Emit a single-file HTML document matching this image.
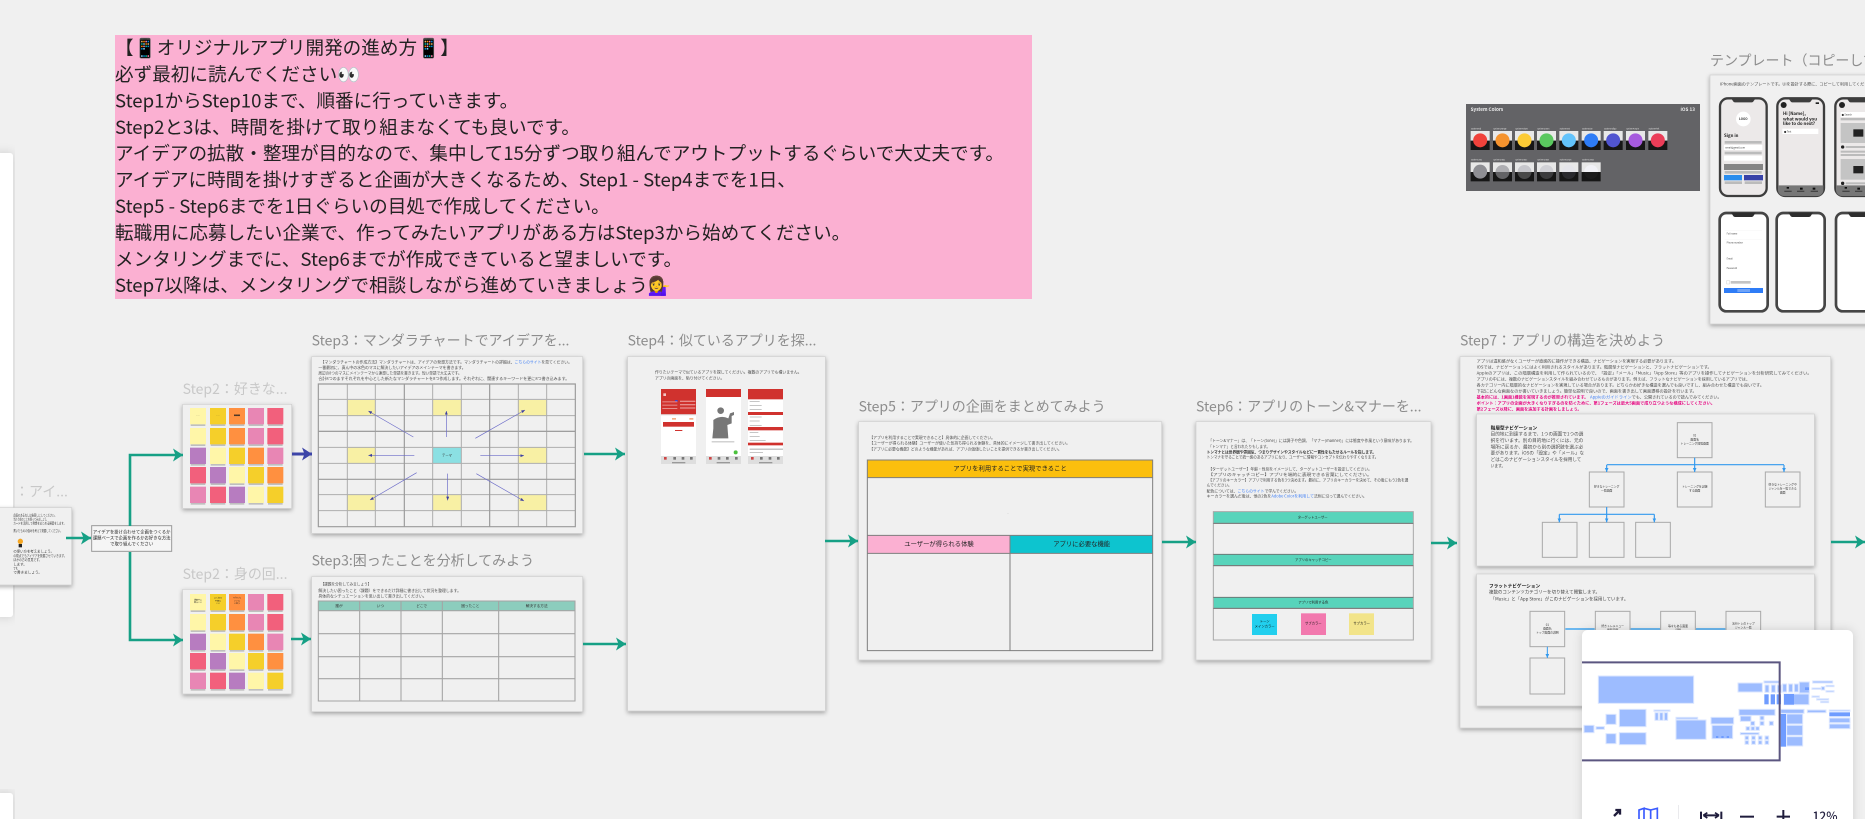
<!DOCTYPE html>
<html lang="ja"><head><meta charset="utf-8"><title>Board</title>
<style>
html,body{margin:0;padding:0;width:1865px;height:819px;overflow:hidden;background:#f0f0f0}
svg{display:block;font-family:"Noto Sans CJK JP","Liberation Sans",sans-serif}
.title{font-size:42px;fill:#8d8d8d}
.lt{font-size:42px;fill:#c8c8c8}
.s{font-size:11.5px;fill:#4a4a4a}
.b{font-weight:700;fill:#333}
.p{font-weight:700;fill:#e6007e}
.l{fill:#3b7cf5}
.box{fill:none;stroke:#a9a9a9;stroke-width:3}
.pnl{fill:#f0f0f0;stroke:#cfcfcf;stroke-width:2;filter:url(#sh)}
.m{fill:#9dbcff;stroke:#dbe6ff;stroke-width:3}
.d{fill:#6f9cff}
</style></head><body>
<svg width="1865" height="819" viewBox="0 0 1865 819" xmlns="http://www.w3.org/2000/svg">
<defs>
<filter id="sh" x="-8%" y="-8%" width="116%" height="118%"><feDropShadow dx="0" dy="5" stdDeviation="6" flood-color="#000" flood-opacity=".33"/></filter>
<filter id="bl" x="0" y="0" width="100%" height="100%"><feGaussianBlur stdDeviation=".35"/></filter>
<filter id="wsh" x="-10%" y="-10%" width="120%" height="120%"><feDropShadow dx="0" dy="0" stdDeviation="5" flood-color="#000" flood-opacity=".14"/></filter>
<marker id="ag" markerUnits="userSpaceOnUse" markerWidth="11" markerHeight="14" refX="10" refY="6.5" orient="auto"><path d="M0 0L10 6.5L0 13L2.5 6.5Z" fill="#14a085"/></marker>
<marker id="ab" markerUnits="userSpaceOnUse" markerWidth="11" markerHeight="14" refX="10" refY="6.5" orient="auto"><path d="M0 0L10 6.5L0 13L2.5 6.5Z" fill="#3c44a8"/></marker>
<marker id="ap" markerUnits="userSpaceOnUse" markerWidth="12" markerHeight="10" refX="11" refY="4.5" orient="auto"><path d="M0 0L11 4.5L0 9Z" fill="#3c3fa0"/></marker>
<marker id="au" markerUnits="userSpaceOnUse" markerWidth="14" markerHeight="12" refX="12" refY="5.5" orient="auto"><path d="M0 0L12 5.5L0 11Z" fill="#3399ee"/></marker>
</defs>
<rect width="1865" height="819" fill="#f0f0f0"/>
<g filter="url(#bl)">

<!-- Pink note -->
<rect x="115" y="35" width="917" height="264" fill="#fbb0d2"/>
<g font-size="18.6" fill="#222">
<text x="115" y="54.5">【📱オリジナルアプリ開発の進め方📱】</text>
<text x="115" y="81">必ず最初に読んでください👀</text>
<text x="115" y="107.4">Step1からStep10まで、順番に行っていきます。</text>
<text x="115" y="133.8">Step2と3は、時間を掛けて取り組まなくても良いです。</text>
<text x="115" y="160.2">アイデアの拡散・整理が目的なので、集中して15分ずつ取り組んでアウトプットするぐらいで大丈夫です。</text>
<text x="115" y="186.6">アイデアに時間を掛けすぎると企画が大きくなるため、Step1 - Step4までを1日、</text>
<text x="115" y="213">Step5 - Step6までを1日ぐらいの目処で作成してください。</text>
<text x="115" y="239.4">転職用に応募したい企業で、作ってみたいアプリがある方はStep3から始めてください。</text>
<text x="115" y="265.8">メンタリングまでに、Step6までが作成できていると望ましいです。</text>
<text x="115" y="292.2">Step7以降は、メンタリングで相談しながら進めていきましょう💁‍♀️</text>
</g>

<!-- System colors -->
<g transform="translate(1440,30) scale(.33333)">
<rect x="78" y="222" width="702" height="261" fill="#636366"/>
<text x="92" y="243" font-size="14" font-weight="700" fill="#eee">System Colors</text>
<text x="765" y="243" font-size="14" font-weight="700" fill="#eee" text-anchor="end">iOS 13</text>
<g fill="#e8e8e8">
<rect x="92" y="303" width="57" height="29"/><rect x="159" y="303" width="57" height="29"/><rect x="225" y="303" width="57" height="29"/><rect x="291" y="303" width="57" height="29"/><rect x="358" y="303" width="57" height="29"/><rect x="425" y="303" width="57" height="29"/><rect x="491" y="303" width="57" height="29"/><rect x="558" y="303" width="57" height="29"/><rect x="625" y="303" width="57" height="29"/>
<rect x="92" y="397" width="57" height="29"/><rect x="159" y="397" width="57" height="29"/><rect x="225" y="397" width="57" height="29"/><rect x="291" y="397" width="57" height="29"/><rect x="358" y="397" width="57" height="29"/><rect x="425" y="397" width="57" height="29"/>
</g>
<g fill="#141414">
<rect x="92" y="332" width="57" height="28"/><rect x="159" y="332" width="57" height="28"/><rect x="225" y="332" width="57" height="28"/><rect x="291" y="332" width="57" height="28"/><rect x="358" y="332" width="57" height="28"/><rect x="425" y="332" width="57" height="28"/><rect x="491" y="332" width="57" height="28"/><rect x="558" y="332" width="57" height="28"/><rect x="625" y="332" width="57" height="28"/>
<rect x="92" y="426" width="57" height="28"/><rect x="159" y="426" width="57" height="28"/><rect x="225" y="426" width="57" height="28"/><rect x="291" y="426" width="57" height="28"/><rect x="358" y="426" width="57" height="28"/><rect x="425" y="426" width="57" height="28"/>
</g>
<circle cx="120.5" cy="331" r="21" fill="#f0433a"/><circle cx="187.5" cy="331" r="21" fill="#f5932f"/><circle cx="253.5" cy="331" r="21" fill="#fccb35"/><circle cx="319.5" cy="331" r="21" fill="#5ac85f"/><circle cx="386.5" cy="331" r="21" fill="#64c3fb"/><circle cx="453.5" cy="331" r="21" fill="#2d7bf6"/><circle cx="519.5" cy="331" r="21" fill="#5155d0"/><circle cx="586.5" cy="331" r="21" fill="#a65ade"/><circle cx="653.5" cy="331" r="21" fill="#eb3d58"/>
<circle cx="120.5" cy="425" r="21" fill="#8e8e93"/>
<path d="M166.5 426a21 21 0 0 1 42 0Z" fill="#aeaeb2"/><path d="M166.5 426a21 21 0 0 0 42 0Z" fill="#636366"/>
<path d="M232.5 426a21 21 0 0 1 42 0Z" fill="#c7c7cc"/><path d="M232.5 426a21 21 0 0 0 42 0Z" fill="#48484a"/>
<path d="M298.5 426a21 21 0 0 1 42 0Z" fill="#d1d1d6"/><path d="M298.5 426a21 21 0 0 0 42 0Z" fill="#3a3a3c"/>
<path d="M365.5 426a21 21 0 0 1 42 0Z" fill="#e5e5ea"/><path d="M365.5 426a21 21 0 0 0 42 0Z" fill="#2c2c2e"/>
<path d="M432.5 426a21 21 0 0 1 42 0Z" fill="#f2f2f7"/><path d="M432.5 426a21 21 0 0 0 42 0Z" fill="#1c1c1e"/>
<g font-size="6" fill="#ddd">
<text x="93" y="298">systemRed</text><text x="160" y="298">systemOrange</text><text x="226" y="298">systemYellow</text><text x="292" y="298">systemGreen</text><text x="359" y="298">systemTeal</text><text x="426" y="298">systemBlue</text><text x="492" y="298">systemIndigo</text><text x="559" y="298">systemPurple</text><text x="626" y="298">systemPink</text>
<text x="93" y="392">systemGray</text><text x="160" y="392">systemGray2</text><text x="226" y="392">systemGray3</text><text x="292" y="392">systemGray4</text><text x="359" y="392">systemGray5</text><text x="426" y="392">systemGray6</text>
</g>
</g>

<!-- Template -->
<g transform="translate(1700,40) scale(.33333)">
<text x="30" y="77" class="title">テンプレート（コピーして利用してください）</text>
<rect x="30" y="105" width="560" height="747" class="pnl"/>
<text x="60" y="136" font-size="11.5" fill="#4a4a4a" textLength="470" lengthAdjust="spacingAndGlyphs">iPhone画面のテンプレートです。UIを設計する際に、コピーして利用してください。</text>
<!-- row 1 -->
<rect x="60" y="175" width="140" height="293" rx="24" fill="#ece9e9" stroke="#3e3e3e" stroke-width="7"/>
<path d="M93 175h74l-6 8a6 6 0 0 1-6 4h-50a6 6 0 0 1-6-4Z" fill="#3e3e3e"/>
<circle cx="130" cy="237" r="22" fill="#fff"/><text x="130" y="240" font-size="9" font-weight="700" text-anchor="middle" fill="#222">LOGO</text>
<text x="72" y="291" font-size="13" font-weight="700" fill="#222">Sign in</text>
<rect x="74" y="303" width="111" height="8" fill="#bbb"/>
<rect x="72" y="315" width="115" height="15" fill="#fff"/><text x="76" y="326" font-size="7" fill="#333">email@gmail.com</text>
<rect x="74" y="335" width="111" height="8" fill="#bbb"/>
<rect x="72" y="347" width="115" height="15" fill="#fff"/>
<rect x="72" y="372" width="117" height="18" fill="#858585"/>
<rect x="74" y="393" width="111" height="8" fill="#bbb"/>
<rect x="72" y="405" width="54" height="16" fill="#2b8ded"/><rect x="132" y="405" width="57" height="16" fill="#3943a8"/>
<rect x="74" y="424" width="52" height="8" fill="#bbb"/><rect x="134" y="424" width="52" height="8" fill="#bbb"/>

<rect x="232" y="175" width="140" height="293" rx="24" fill="#ece9e9" stroke="#3e3e3e" stroke-width="7"/>
<path d="M265 175h74l-6 8a6 6 0 0 1-6 4h-50a6 6 0 0 1-6-4Z" fill="#3e3e3e"/>
<path d="M234 436h136v14a18 18 0 0 1-18 18h-100a18 18 0 0 1-18-18Z" fill="#777"/>
<circle cx="251" cy="195" r="9" fill="#222"/><rect x="347" y="187" width="10" height="5" fill="#222"/>
<g font-size="13" font-weight="700" fill="#222"><text x="249" y="225">Hi [Name],</text><text x="249" y="241">what would you</text><text x="249" y="255">like to do next?</text></g>
<rect x="247" y="266" width="108" height="16" fill="#fff"/><text x="252" y="277" font-size="7" fill="#333">● Text</text>
<g fill="#444"><rect x="253" y="452" width="22" height="4"/><rect x="291" y="452" width="22" height="4"/><rect x="332" y="452" width="22" height="4"/><rect x="300" y="443" width="8" height="6" fill="#111"/><rect x="338" y="443" width="8" height="6" fill="#111"/><rect x="260" y="441" width="7" height="5" fill="#111"/></g>

<rect x="406" y="175" width="140" height="293" rx="24" fill="#ece9e9" stroke="#3e3e3e" stroke-width="7"/>
<path d="M440 175h74l-6 8a6 6 0 0 1-6 4h-50a6 6 0 0 1-6-4Z" fill="#3e3e3e"/>
<circle cx="426" cy="195" r="9" fill="#222"/>
<rect x="422" y="216" width="120" height="15" fill="#fff"/><text x="425" y="227" font-size="7" fill="#333">● Search</text>
<rect x="422" y="234" width="120" height="7" fill="#bbb"/>
<rect x="422" y="249" width="120" height="60" fill="#c4c4c4"/><rect x="460" y="268" width="30" height="22" fill="#222"/>
<circle cx="428" cy="321" r="5" fill="#222"/><rect x="437" y="318" width="100" height="6" fill="#bbb"/>
<rect x="422" y="332" width="120" height="6" fill="#bbb"/><rect x="422" y="342" width="120" height="6" fill="#bbb"/>
<rect x="422" y="357" width="120" height="62" fill="#c4c4c4"/><rect x="460" y="378" width="30" height="22" fill="#222"/>
<circle cx="428" cy="430" r="5" fill="#222"/><rect x="437" y="427" width="100" height="6" fill="#bbb"/>
<path d="M408 436h140v32h-122a18 18 0 0 1-18-18Z" fill="#777"/>
<rect x="427" y="452" width="22" height="4" fill="#444"/><rect x="465" y="452" width="22" height="4" fill="#444"/><rect x="472" y="443" width="8" height="6" fill="#111"/><rect x="434" y="441" width="7" height="5" fill="#111"/>
<!-- row 2 -->
<g fill="#fff" stroke="#444" stroke-width="8">
<rect x="59" y="519" width="144" height="295" rx="20"/>
<rect x="230" y="519" width="144" height="295" rx="20"/>
<rect x="408" y="519" width="144" height="295" rx="20"/>
</g>
<g fill="#2e2e2e">
<path d="M93 518h74l-6 9a6 6 0 0 1-6 4h-50a6 6 0 0 1-6-4Z"/>
<path d="M265 518h74l-6 9a6 6 0 0 1-6 4h-50a6 6 0 0 1-6-4Z"/>
<path d="M443 518h74l-6 9a6 6 0 0 1-6 4h-50a6 6 0 0 1-6-4Z"/>
</g>
<g font-size="7" fill="#444"><text x="80" y="583">Full name</text><text x="80" y="610">Phone number</text><text x="80" y="659">Email</text><text x="80" y="687">Password</text></g>
<rect x="74" y="571" width="112" height="1" fill="#eee"/><rect x="74" y="598" width="112" height="1" fill="#eee"/>
<rect x="92" y="723" width="60" height="8" fill="#c4c4c4"/><rect x="80" y="722" width="9" height="10" fill="#fff" stroke="#bbb"/>
<rect x="72" y="744" width="117" height="15" fill="#2d7bf6"/><rect x="112" y="747" width="38" height="9" fill="#6ea3f8"/>
</g>

<!-- Left white panels -->
<rect x="-6" y="153" width="19" height="464" rx="3" fill="#fff" filter="url(#wsh)"/>

<!-- Step1 card -->
<g transform="translate(0,320) scale(.33333)">
<text x="45" y="530" class="lt">：アイ...</text>
<rect x="-100" y="563" width="315" height="232" class="pnl"/>
<g font-size="11" fill="#3c3c3c">
<text x="40" y="589" textLength="130" lengthAdjust="spacingAndGlyphs">企画のあるなしは後回しにしてください。</text>
<text x="40" y="601" textLength="105" lengthAdjust="spacingAndGlyphs">当たり前のことを探ってみましょう。</text>
<text x="40" y="613" textLength="158" lengthAdjust="spacingAndGlyphs">カードを活用して発想をまとめる練習をします。</text>
<text x="40" y="636" textLength="148" lengthAdjust="spacingAndGlyphs">書いたものの強みを考えて発展してください。</text>
<text x="40" y="698" textLength="122" lengthAdjust="spacingAndGlyphs">の使い方を考えましょう。</text>
<text x="40" y="711" textLength="160" lengthAdjust="spacingAndGlyphs">の視点でもアイデアを発展させていきます。</text>
<text x="40" y="723" textLength="85" lengthAdjust="spacingAndGlyphs">ほかの方の意見です。</text>
<text x="40" y="736" textLength="40" lengthAdjust="spacingAndGlyphs">します。</text>
<text x="40" y="748" textLength="18" lengthAdjust="spacingAndGlyphs">です。</text>
<text x="40" y="760" textLength="86" lengthAdjust="spacingAndGlyphs">で書きましょう。</text>
</g>
<circle cx="61" cy="664" r="8" fill="#f5a623"/><rect x="56" y="672" width="10" height="10" fill="#222"/>
<rect x="275" y="617" width="240" height="77" fill="#f5f5f5" stroke="#9a9a9a" stroke-width="3"/>
<g font-size="13" fill="#222" text-anchor="middle">
<text x="395" y="641">アイデアを掛け合わせて企画をつくるか</text>
<text x="395" y="659">課題ベースで企画を作るかお好きな方法</text>
<text x="395" y="677">で取り組んでください</text>
</g>
</g>

<!-- Sticky panels -->
<g transform="translate(0,320) scale(.33333)">
<text x="548" y="222" class="lt">Step2：好きな...</text>
<text x="548" y="777" class="lt">Step2：身の回...</text>
<rect x="548" y="253" width="327" height="312" class="pnl"/>
<rect x="548" y="808" width="327" height="314" class="pnl"/>
<g id="st1">
<g fill="#a0a0a0" opacity=".6">
<rect x="572" y="268" width="44" height="50"/><rect x="632" y="268" width="44" height="50"/><rect x="689" y="268" width="44" height="50"/><rect x="746" y="268" width="44" height="50"/><rect x="804" y="268" width="44" height="50"/>
<rect x="572" y="328" width="44" height="50"/><rect x="632" y="328" width="44" height="50"/><rect x="689" y="328" width="44" height="50"/><rect x="746" y="328" width="44" height="50"/><rect x="804" y="328" width="44" height="50"/>
<rect x="572" y="387" width="44" height="50"/><rect x="632" y="387" width="44" height="50"/><rect x="689" y="387" width="44" height="50"/><rect x="746" y="387" width="44" height="50"/><rect x="804" y="387" width="44" height="50"/>
<rect x="572" y="445" width="44" height="50"/><rect x="632" y="445" width="44" height="50"/><rect x="689" y="445" width="44" height="50"/><rect x="746" y="445" width="44" height="50"/><rect x="804" y="445" width="44" height="50"/>
<rect x="572" y="504" width="44" height="50"/><rect x="632" y="504" width="44" height="50"/><rect x="689" y="504" width="44" height="50"/><rect x="746" y="504" width="44" height="50"/><rect x="804" y="504" width="44" height="50"/>
</g>
<rect x="570" y="264" width="48" height="49" fill="#fff6a8"/><rect x="630" y="264" width="48" height="49" fill="#f5cf2c"/><rect x="687" y="264" width="48" height="49" fill="#ff9040"/><rect x="744" y="264" width="48" height="49" fill="#e886b4"/><rect x="802" y="264" width="48" height="49" fill="#f2607c"/>
<rect x="570" y="324" width="48" height="49" fill="#fff6a8"/><rect x="630" y="324" width="48" height="49" fill="#f5cf2c"/><rect x="687" y="324" width="48" height="49" fill="#ff9040"/><rect x="744" y="324" width="48" height="49" fill="#e886b4"/><rect x="802" y="324" width="48" height="49" fill="#f2607c"/>
<rect x="570" y="383" width="48" height="49" fill="#b77cc0"/><rect x="630" y="383" width="48" height="49" fill="#fff6a8"/><rect x="687" y="383" width="48" height="49" fill="#f5cf2c"/><rect x="744" y="383" width="48" height="49" fill="#ff9040"/><rect x="802" y="383" width="48" height="49" fill="#e886b4"/>
<rect x="570" y="441" width="48" height="49" fill="#f2607c"/><rect x="630" y="441" width="48" height="49" fill="#b77cc0"/><rect x="687" y="441" width="48" height="49" fill="#fff6a8"/><rect x="744" y="441" width="48" height="49" fill="#f5cf2c"/><rect x="802" y="441" width="48" height="49" fill="#ff9040"/>
<rect x="570" y="500" width="48" height="49" fill="#e886b4"/><rect x="630" y="500" width="48" height="49" fill="#f2607c"/><rect x="687" y="500" width="48" height="49" fill="#b77cc0"/><rect x="744" y="500" width="48" height="49" fill="#fff6a8"/><rect x="802" y="500" width="48" height="49" fill="#f5cf2c"/>
</g>
<use href="#st1" y="558"/>
<g font-size="6" fill="#222" text-anchor="middle">
<text x="594" y="288">・・</text><text x="654" y="288">・・</text><text x="711" y="288">●●●</text>
<text x="594" y="842">通勤中に</text><text x="594" y="849">困ること</text>
<text x="654" y="836">よくある</text><text x="654" y="844">不便な</text><text x="654" y="852">こと</text>
<text x="711" y="836">できたら</text><text x="711" y="844">いいな</text><text x="711" y="852">と思う</text>
</g>
</g>

<!-- Step3 -->
<g transform="translate(300,320) scale(.33333)">
<text x="35" y="76" class="title">Step3：マンダラチャートでアイデアを...</text>
<rect x="35" y="110" width="813" height="530" class="pnl"/>
<text x="62" y="130" class="s" textLength="582" lengthAdjust="spacingAndGlyphs">【マンダラチャートの作成方法】マンダラチャートは、アイデアの発想方法です。マンダラチャートの詳細は、</text>
<text x="644" y="130" class="s l" textLength="80" lengthAdjust="spacingAndGlyphs">こちらのサイト</text>
<text x="724" y="130" class="s" textLength="92" lengthAdjust="spacingAndGlyphs">を見てください。</text>
<text x="55" y="147" class="s" textLength="442" lengthAdjust="spacingAndGlyphs">一番最初に、真ん中の水色のマスに解決したいアイデアのメインテーマを書きます。</text>
<text x="55" y="164" class="s" textLength="430" lengthAdjust="spacingAndGlyphs">周辺の8つのマスにメインテーマから連想した単語を書きます。短い単語で大丈夫です。</text>
<text x="55" y="180" class="s" textLength="753" lengthAdjust="spacingAndGlyphs">合計8つのますそれぞれを中心とした新たなマンダラチャートを8つ作成します。それぞれに、関連するキーワードを更に8つ書き込みます。</text>
<g fill="#f8f0a4">
<rect x="142" y="240" width="84" height="47"/><rect x="398" y="240" width="86" height="47"/><rect x="655" y="240" width="85" height="47"/>
<rect x="142" y="382" width="84" height="48"/><rect x="655" y="382" width="85" height="48"/>
<rect x="142" y="524" width="84" height="48"/><rect x="398" y="524" width="86" height="48"/><rect x="655" y="524" width="85" height="48"/>
</g>
<rect x="398" y="382" width="86" height="48" fill="#8be0e3"/>
<text x="441" y="409" font-size="10" fill="#333" text-anchor="middle">テーマ</text>
<path d="M142 192V620M226 192V620M398 192V620M484 192V620M655 192V620M740 192V620M55 238H826M55 287H826M55 334H826M55 430H826M55 524H826M55 572H826M55 382H826" fill="none" stroke="#adadad" stroke-width="3"/>
<path d="M55 192H826V620H55ZM313 192V620M569 192V620M55 334H826M55 478H826" fill="none" stroke="#9a9a9a" stroke-width="3.5"/>
<g stroke="#6a6ac8" stroke-width="2" fill="none">
<path d="M340 351L205 273" marker-end="url(#ap)"/><path d="M439 351V273" marker-end="url(#ap)"/><path d="M526 355L675 270" marker-end="url(#ap)"/><path d="M343 407L205 406" marker-end="url(#ap)"/><path d="M541 407H672" marker-end="url(#ap)"/><path d="M350 458L210 540" marker-end="url(#ap)"/><path d="M443 461V541" marker-end="url(#ap)"/><path d="M529 461L672 543" marker-end="url(#ap)"/>
</g>
<text x="35" y="736" class="title">Step3:困ったことを分析してみよう</text>
<rect x="35" y="770" width="813" height="405" class="pnl"/>
<text x="62" y="797" class="s" textLength="152" lengthAdjust="spacingAndGlyphs">【課題を分析してみましょう】</text>
<text x="55" y="816" class="s" textLength="428" lengthAdjust="spacingAndGlyphs">解決したい困ったこと（課題）をできるだけ詳細に書き出して状況を整理します。</text>
<text x="55" y="833" class="s" textLength="325" lengthAdjust="spacingAndGlyphs">具体的なシチュエーションを思い出して書き出してください。</text>
<rect x="55" y="843" width="770" height="29" fill="#8ccdbd"/>
<path d="M55 843H825V1143H55ZM179 843V1143M303 843V1143M427 843V1143M596 843V1143M55 872H825M55 941H825M55 1010H825M55 1076H825" fill="none" stroke="#a4a4a4" stroke-width="3.2"/>
<g font-size="11" fill="#333" text-anchor="middle"><text x="117" y="861">誰が</text><text x="241" y="861">いつ</text><text x="365" y="861">どこで</text><text x="511" y="861">困ったこと</text><text x="710" y="861">解決する方法</text></g>
</g>

<!-- Step4 -->
<g transform="translate(600,320) scale(.33333)">
<text x="83" y="76" class="title">Step4：似ているアプリを探...</text>
<rect x="83" y="110" width="593" height="1063" class="pnl"/>
<text x="165" y="161" class="s" textLength="440" lengthAdjust="spacingAndGlyphs">作りたいテーマで似ているアプリを探してください。複数のアプリでも構いません。</text>
<text x="165" y="179" class="s" textLength="208" lengthAdjust="spacingAndGlyphs">アプリの画面を、貼り付けてください。</text>
<rect x="183" y="207" width="105" height="225" fill="#fff"/><rect x="183" y="207" width="105" height="76" fill="#d0312d"/><rect x="183" y="283" width="105" height="3" fill="#ddd"/>
<rect x="189" y="306" width="93" height="14" fill="#d0312d"/><rect x="183" y="408" width="105" height="24" fill="#dedede"/>
<rect x="190" y="220" width="8" height="8" fill="#f4c6c5"/><rect x="225" y="240" width="8" height="6" fill="#4444cc"/>
<rect x="240" y="242" width="46" height="4" fill="#e78e8c"/><rect x="240" y="252" width="46" height="4" fill="#e78e8c"/><rect x="240" y="262" width="46" height="4" fill="#e78e8c"/>
<rect x="187" y="244" width="45" height="3" fill="#e78e8c"/><rect x="187" y="254" width="45" height="3" fill="#e78e8c"/><rect x="187" y="264" width="45" height="3" fill="#e78e8c"/>
<rect x="216" y="294" width="12" height="5" fill="#f4b087"/><rect x="268" y="294" width="12" height="5" fill="#f4b087"/><rect x="225" y="330" width="22" height="3" fill="#d0312d"/>
<rect x="192" y="411" width="8" height="8" fill="#c44"/><rect x="220" y="411" width="8" height="8" fill="#777"/><rect x="245" y="411" width="8" height="8" fill="#777"/><rect x="270" y="411" width="8" height="8" fill="#777"/><rect x="216" y="426" width="40" height="4" fill="#999"/>

<rect x="318" y="207" width="105" height="225" fill="#fff"/><rect x="318" y="207" width="105" height="24" fill="#d0312d"/><rect x="318" y="408" width="105" height="24" fill="#dedede"/>
<circle cx="362" cy="272" r="10" fill="#777"/>
<path d="M340 300Q362 284 385 295L390 280L402 276V285L395 288V310L382 315L385 355H337L340 325Z" fill="#777"/>
<rect x="335" y="364" width="68" height="3" fill="#bbb"/><circle cx="407" cy="397" r="6" fill="#4cc23c"/>
<rect x="327" y="411" width="8" height="8" fill="#c44"/><rect x="353" y="411" width="8" height="8" fill="#777"/><rect x="378" y="411" width="8" height="8" fill="#777"/><rect x="405" y="411" width="8" height="8" fill="#777"/><rect x="350" y="426" width="40" height="4" fill="#999"/>

<rect x="444" y="207" width="105" height="225" fill="#fff"/><rect x="444" y="207" width="105" height="31" fill="#d0312d"/><rect x="444" y="276" width="105" height="9" fill="#d0312d"/><rect x="444" y="321" width="105" height="10" fill="#d0312d"/><rect x="444" y="368" width="105" height="8" fill="#d0312d"/><rect x="444" y="408" width="105" height="24" fill="#dedede"/>
<g fill="#aaa"><rect x="449" y="244" width="30" height="2"/><rect x="449" y="256" width="36" height="2"/><rect x="449" y="268" width="36" height="2"/><rect x="449" y="290" width="36" height="2"/><rect x="449" y="302" width="30" height="2"/><rect x="449" y="315" width="36" height="2"/><rect x="449" y="337" width="26" height="2"/><rect x="449" y="349" width="30" height="2"/><rect x="449" y="360" width="48" height="2"/><rect x="449" y="386" width="100" height="3"/><rect x="449" y="396" width="40" height="2"/></g>
<rect x="453" y="411" width="8" height="8" fill="#c44"/><rect x="480" y="411" width="8" height="8" fill="#777"/><rect x="506" y="411" width="8" height="8" fill="#777"/><rect x="531" y="411" width="8" height="8" fill="#777"/><rect x="477" y="426" width="40" height="4" fill="#999"/>
</g>

<!-- Step5 -->
<g transform="translate(840,390) scale(.33333)">
<text x="56" y="65" class="title">Step5：アプリの企画をまとめてみよう</text>
<rect x="56" y="95" width="909" height="715" class="pnl"/>
<text x="88" y="147" class="s" textLength="377" lengthAdjust="spacingAndGlyphs">【アプリを利用することで実現できること】具体的に企画してください。</text>
<text x="88" y="164" class="s" textLength="602" lengthAdjust="spacingAndGlyphs">【ユーザーが得られる体験】ユーザーが使いた気持ち得られる体験を、具体的にイメージして書き出してください。</text>
<text x="88" y="181" class="s" textLength="577" lengthAdjust="spacingAndGlyphs">【アプリに必要な機能】どのような機能があれば、アプリの価値したいことを提供できるか書き出してください。</text>
<rect x="82" y="210" width="856" height="53" fill="#fbbf0c"/>
<rect x="82" y="436" width="428" height="54" fill="#fbb0d2"/><rect x="510" y="436" width="428" height="54" fill="#10c4cf"/>
<path d="M82 210H938V782H82ZM82 263H938M82 436H938M82 490H938M510 436V782" fill="none" stroke="#7e7e7e" stroke-width="3"/>
<g font-size="19" fill="#222" text-anchor="middle">
<text x="510" y="241">アプリを利用することで実現できること</text>
<text x="297" y="468">ユーザーが得られる体験</text>
<text x="725" y="468">アプリに必要な機能</text>
</g>
<text x="504" y="372" font-size="8" fill="#555" text-anchor="middle">.</text>
</g>

<!-- Step6 -->
<g transform="translate(1190,390) scale(.33333)">
<text x="18" y="65" class="title">Step6：アプリのトーン&amp;マナーを...</text>
<rect x="18" y="95" width="705" height="715" class="pnl"/>
<text x="55" y="156" class="s" textLength="617" lengthAdjust="spacingAndGlyphs">「トーン&amp;マナー」は、「トーン(tone)」には調子や色調、「マナー(manner)」には態度や作風という意味があります。</text>
<text x="55" y="174" class="s" textLength="185" lengthAdjust="spacingAndGlyphs">「トンマナ」と言われたりもします。</text>
<text x="50" y="190" class="s b" textLength="508" lengthAdjust="spacingAndGlyphs">トンマナとは世界観や雰囲気、つまりデザインやスタイルなどに一貫性をもたせるルールを指します。</text>
<text x="50" y="205" class="s" textLength="515" lengthAdjust="spacingAndGlyphs">トンマナを守ることで統一感のあるアプリになり、ユーザーに情報やコンセプトを伝わりやすくなります。</text>
<text x="55" y="241" class="s" textLength="491" lengthAdjust="spacingAndGlyphs">【ターゲットユーザー】年齢・性別をイメージして、ターゲットユーザーを設定してください。</text>
<text x="55" y="258" class="s" textLength="490" lengthAdjust="spacingAndGlyphs">【アプリのキャッチコピー】アプリを端的に表現できる言葉にしてください。</text>
<text x="55" y="274" class="s" textLength="600" lengthAdjust="spacingAndGlyphs">【アプリのキーカラー】アプリで利用する色を3つ決めます。最初に、アプリのキーカラーを決めて、その後にもう2色を選</text>
<text x="50" y="290" class="s" textLength="75" lengthAdjust="spacingAndGlyphs">んでください。</text>
<text x="50" y="308" class="s" textLength="92" lengthAdjust="spacingAndGlyphs">配色については、</text>
<text x="143" y="308" class="s l" textLength="80" lengthAdjust="spacingAndGlyphs">こちらのサイト</text>
<text x="224" y="308" class="s" textLength="101" lengthAdjust="spacingAndGlyphs">で学んでください。</text>
<text x="50" y="323" class="s" textLength="194" lengthAdjust="spacingAndGlyphs">キーカラーを選んだ後は、他の2色を</text>
<text x="244" y="323" class="s l" textLength="128" lengthAdjust="spacingAndGlyphs">Adobe Colorを利用して</text>
<text x="372" y="323" class="s" textLength="158" lengthAdjust="spacingAndGlyphs">法則に沿って選んでください。</text>
<g fill="#58d4bb"><rect x="70" y="365" width="600" height="35"/><rect x="70" y="493" width="600" height="34"/><rect x="70" y="622" width="600" height="33"/></g>
<path d="M70 365H670V750H70ZM70 400H670M70 527H670M70 655H670" fill="none" stroke="#a8a8a8" stroke-width="3"/>
<path d="M70 400H670M70 493H670M70 527H670M70 622H670M70 655H670" fill="none" stroke="#6c6c6c" stroke-width="2.5"/>
<g font-size="10" fill="#222" text-anchor="middle"><text x="368" y="385">ターゲットユーザー</text><text x="370" y="513">アプリのキャッチコピー</text><text x="370" y="641">アプリで利用する色</text></g>
<rect x="186" y="672" width="75" height="63" fill="#22cfee"/><rect x="333" y="670" width="75" height="65" fill="#f279ae"/><rect x="477" y="670" width="75" height="65" fill="#f2e48a"/>
<g font-size="10" fill="#111" text-anchor="middle"><text x="224" y="697">トーン</text><text x="224" y="712">メインカラー</text><text x="370" y="704">サブカラー</text><text x="515" y="704">サブカラー</text></g>
</g>

<!-- Step7 -->
<g transform="translate(1450,330) scale(.33333)">
<text x="30" y="47" class="title">Step7：アプリの構造を決めよう</text>
<rect x="30" y="80" width="1112" height="1114" class="pnl"/>
<text x="80" y="97" class="s" textLength="598" lengthAdjust="spacingAndGlyphs">アプリは違和感がなくユーザーが直感的に操作ができる構造、ナビゲーションを実現する必要があります。</text>
<text x="80" y="116" class="s" textLength="705" lengthAdjust="spacingAndGlyphs">iOSでは、ナビゲーションにはよく利用されるスタイルがあります。階層型ナビゲーションと、フラットナビゲーションです。</text>
<text x="80" y="134" class="s" textLength="1005" lengthAdjust="spacingAndGlyphs">Appleのアプリは、この階層構造を利用して作られているので、「設定」「メール」「Music」「App Store」等のアプリを操作してナビゲーションを分析研究してみてください。</text>
<text x="80" y="152" class="s" textLength="820" lengthAdjust="spacingAndGlyphs">アプリの中には、複数のナビゲーションスタイルを組み合わせているものがあります。例えば、フラットなナビゲーションを採用しているアプリでは、</text>
<text x="80" y="170" class="s" textLength="862" lengthAdjust="spacingAndGlyphs">各カテゴリー内に階層的なナビゲーションを実現している場合があります。どちらかお好きな構造を選んでも良いですし、組み合わせた構造でも良いです。</text>
<text x="80" y="188" class="s" textLength="660" lengthAdjust="spacingAndGlyphs">下記にどんな画面なのか書いていきましょう。簡単な説明で良いので、画面を書き出して画面遷移の設計を行います。</text>
<text x="80" y="206" class="s p" textLength="335" lengthAdjust="spacingAndGlyphs">基本的には、1画面1機能を実現するのが推奨されています。</text>
<text x="420" y="206" class="s l" textLength="125" lengthAdjust="spacingAndGlyphs">Appleのガイドライン</text>
<text x="545" y="206" class="s" textLength="270" lengthAdjust="spacingAndGlyphs">でも、公開されているので読んでみてください。</text>
<text x="80" y="224" class="s p" textLength="715" lengthAdjust="spacingAndGlyphs">ポイント：アプリの企画が大きくなりすぎるのを防ぐために、第1フェーズは最大5画面で成り立つような構成にしてください。</text>
<text x="80" y="242" class="s p" textLength="315" lengthAdjust="spacingAndGlyphs">第2フェーズ以降に、画面を追加する計画をしましょう。</text>

<rect x="80" y="252" width="1013" height="456" class="pnl"/>
<text x="122" y="299" font-size="14" font-weight="700" fill="#222">階層型ナビゲーション</text>
<g font-size="14" fill="#4a4a4a">
<text x="122" y="317" textLength="278" lengthAdjust="spacingAndGlyphs">目的地に到達するまで、1つの画面で1つの選</text>
<text x="122" y="336" textLength="278" lengthAdjust="spacingAndGlyphs">択を行います。別の目的地に行くには、元の</text>
<text x="122" y="355" textLength="278" lengthAdjust="spacingAndGlyphs">場所に戻るか、最初から別の選択肢を選ぶ必</text>
<text x="122" y="374" textLength="280" lengthAdjust="spacingAndGlyphs">要があります。iOSの「設定」や「メール」な</text>
<text x="122" y="393" textLength="272" lengthAdjust="spacingAndGlyphs">どはこのナビゲーションスタイルを採用して</text>
<text x="122" y="412" textLength="44" lengthAdjust="spacingAndGlyphs">います。</text>
</g>
<rect class="box" x="682" y="278" width="104" height="105"/><rect class="box" x="418" y="426" width="104" height="105"/><rect class="box" x="682" y="426" width="104" height="105"/><rect class="box" x="946" y="426" width="104" height="105"/><rect class="box" x="277" y="577" width="104" height="105"/><rect class="box" x="418" y="577" width="104" height="105"/><rect class="box" x="557" y="577" width="104" height="105"/>
<g font-size="8.5" fill="#333" text-anchor="middle">
<text x="734" y="320">01</text><text x="734" y="331">画面名</text><text x="734" y="343">トレーニング閲覧画面</text>
<text x="470" y="473">好きなトレーニング</text><text x="470" y="485">一覧画面</text>
<text x="734" y="473">トレーニングを記録</text><text x="734" y="485">する画面</text>
<text x="998" y="466">好きなトレーニングや</text><text x="998" y="478">ジャンルを一覧できる</text><text x="998" y="490">画面</text>
</g>
<g fill="none" stroke="#3399ee" stroke-width="3.5">
<path d="M734 383V426" marker-end="url(#au)"/><path d="M470 405V426" marker-end="url(#au)"/><path d="M1002 405V426" marker-end="url(#au)"/><path d="M470 404H1002"/>
<path d="M470 531V577" marker-end="url(#au)"/><path d="M328 553V577" marker-end="url(#au)"/><path d="M613 553V577" marker-end="url(#au)"/><path d="M328 553H613"/>
</g>

<rect x="80" y="732" width="1013" height="396" class="pnl"/>
<text x="117" y="773" font-size="14" font-weight="700" fill="#222">フラットナビゲーション</text>
<text x="117" y="791" font-size="13" fill="#444" textLength="333" lengthAdjust="spacingAndGlyphs">複数のコンテンツカテゴリーを切り替えて閲覧します。</text>
<text x="122" y="811" font-size="13" fill="#444" textLength="413" lengthAdjust="spacingAndGlyphs">「Music」と「App Store」がこのナビゲーションを採用しています。</text>
<rect class="box" x="240" y="844" width="104" height="106"/><rect class="box" x="436" y="844" width="104" height="106"/><rect class="box" x="632" y="844" width="104" height="106"/><rect class="box" x="828" y="844" width="104" height="106"/><rect class="box" x="240" y="984" width="104" height="108"/>
<g font-size="8.5" fill="#333" text-anchor="middle">
<text x="292" y="888">01</text><text x="292" y="899">画面名</text><text x="292" y="911">トップ画面の説明</text>
<text x="488" y="891">好きトレメニュー</text><text x="488" y="903">閲覧画面</text>
<text x="684" y="891">等々もある画面</text><text x="684" y="903">記録</text>
<text x="880" y="883">流行トレのトップ</text><text x="880" y="895">ジャンル一覧</text><text x="880" y="907">できる</text>
</g>
<g fill="none" stroke="#5ab0f0" stroke-width="5">
<path d="M346 897H434M542 897H630M738 897H826"/>
</g>
<path d="M292 950V984" fill="none" stroke="#3399ee" stroke-width="3" marker-end="url(#au)"/>
</g>

<!-- Arrows -->
<g fill="none" stroke="#14a085" stroke-width="2.6">
<path d="M66 538H91" marker-end="url(#ag)"/>
<path d="M130 526V455H183" marker-end="url(#ag)"/>
<path d="M130 552V640H183" marker-end="url(#ag)"/>
<path d="M291 639H311" marker-end="url(#ag)"/>
<path d="M584 454H625" marker-end="url(#ag)"/>
<path d="M583 644H626" marker-end="url(#ag)"/>
<path d="M825 541H858" marker-end="url(#ag)"/>
<path d="M1162 542H1196" marker-end="url(#ag)"/>
<path d="M1431 543H1457" marker-end="url(#ag)"/>
<path d="M1831 542H1865" marker-end="url(#ag)"/>
<path d="M292 454H312" stroke="#3c44a8" stroke-width="3" marker-end="url(#ab)"/>
</g>

<rect x="-6" y="793" width="19" height="40" rx="3" fill="#fff" filter="url(#wsh)"/>
</g>

<!-- Minimap -->
<rect x="1582" y="630" width="271" height="200" rx="6" fill="#fff" filter="url(#wsh)"/>
<g transform="translate(1560,620) scale(.33333)">
<rect class="m" x="115" y="168" width="286" height="82"/>
<rect class="m" x="534" y="189" width="73" height="27"/>
<rect class="m" x="72" y="316" width="30" height="22"/><rect class="m" x="108" y="320" width="25" height="8"/>
<rect class="m" x="138" y="283" width="30" height="30"/><rect class="m" x="138" y="341" width="30" height="30"/>
<rect class="m" x="178" y="268" width="80" height="52"/><rect class="m" x="178" y="338" width="80" height="36"/>
<rect class="m" x="282" y="270" width="48" height="4"/><rect class="m" x="285" y="278" width="10" height="23"/><rect class="m" x="299" y="278" width="10" height="23"/><rect class="m" x="313" y="278" width="10" height="23"/>
<rect class="m" x="348" y="292" width="65" height="5"/><rect class="m" x="348" y="300" width="90" height="58"/>
<rect class="m" x="453" y="292" width="68" height="20"/><rect class="m" x="456" y="316" width="62" height="40"/>
<rect class="d" x="468" y="348" width="7" height="6"/><rect class="d" x="484" y="348" width="7" height="6"/><rect class="d" x="500" y="348" width="7" height="6"/>
<rect class="m" x="537" y="268" width="108" height="18"/><rect class="m" x="541" y="288" width="32" height="16"/>
<rect class="m" x="600" y="288" width="12" height="12"/><rect class="m" x="572" y="304" width="12" height="12"/><rect class="m" x="600" y="304" width="12" height="12"/><rect class="m" x="628" y="304" width="12" height="12"/>
<rect class="m" x="558" y="320" width="11" height="11"/><rect class="m" x="573" y="320" width="11" height="11"/><rect class="m" x="587" y="320" width="11" height="11"/>
<rect class="m" x="541" y="338" width="56" height="6"/>
<rect class="m" x="555" y="348" width="11" height="11"/><rect class="m" x="575" y="348" width="11" height="11"/><rect class="m" x="595" y="348" width="11" height="11"/><rect class="m" x="615" y="348" width="11" height="11"/>
<rect class="m" x="555" y="362" width="11" height="11"/><rect class="m" x="575" y="362" width="11" height="11"/><rect class="m" x="595" y="362" width="11" height="11"/><rect class="m" x="615" y="362" width="11" height="11"/>
<!-- top right cluster -->
<rect class="m" x="612" y="183" width="48" height="6"/>
<rect class="m" x="615" y="195" width="12" height="22"/><rect class="m" x="634" y="195" width="12" height="22"/><rect class="m" x="652" y="195" width="12" height="22"/>
<rect class="m" x="668" y="192" width="12" height="24"/><rect class="m" x="686" y="192" width="12" height="24"/><rect class="m" x="703" y="192" width="12" height="24"/>
<rect x="718" y="186" width="30" height="33" class="m"/><rect class="d" x="735" y="202" width="12" height="8"/>
<rect class="d" x="613" y="223" width="13" height="30"/><rect class="d" x="632" y="223" width="13" height="30"/><rect class="d" x="650" y="223" width="13" height="30"/>
<rect class="m" x="672" y="222" width="75" height="32"/><rect class="d" x="672" y="222" width="30" height="32"/>
<rect class="m" x="662" y="268" width="70" height="12"/>
<rect class="d" x="662" y="282" width="16" height="98"/>
<rect class="m" x="680" y="282" width="48" height="30"/><rect class="m" x="680" y="316" width="48" height="30"/><rect class="m" x="680" y="350" width="48" height="28"/>
<rect class="m" x="742" y="270" width="56" height="8"/>
<rect class="m" x="808" y="270" width="62" height="4"/><rect class="d" x="808" y="277" width="62" height="12"/><rect class="m" x="808" y="294" width="62" height="14"/><rect class="m" x="808" y="312" width="62" height="14"/>
<rect class="m" x="758" y="183" width="60" height="6"/><rect class="m" x="756" y="204" width="28" height="4"/><rect class="m" x="784" y="200" width="10" height="10"/><rect class="m" x="798" y="196" width="24" height="4"/><rect class="m" x="798" y="212" width="24" height="4"/>
<rect class="m" x="756" y="228" width="22" height="4"/><rect class="m" x="770" y="236" width="36" height="4"/><rect class="m" x="782" y="244" width="24" height="4"/>
<!-- viewport -->
<path d="M66 127H659V421H66" fill="none" stroke="#5b5680" stroke-width="6"/>
<!-- controls -->
<path d="M162 588L178 572M166 570H180V584" fill="none" stroke="#1f1c3c" stroke-width="7"/>
<path d="M237 597V570L252 565V597M252 565L272 570V597M272 570L292 565V597" fill="none" stroke="#3b5bff" stroke-width="5"/>
<rect x="354" y="555" width="2" height="42" fill="#e0e0e4"/>
<path d="M423 575V597M484 575V597M432 586H475" fill="none" stroke="#1f1c3c" stroke-width="6"/>
<path d="M430 586L442 578M430 586L442 594M477 586L465 578M477 586L465 594" fill="none" stroke="#1f1c3c" stroke-width="5"/>
<path d="M540 590H582" stroke="#1f1c3c" stroke-width="6"/>
<path d="M650 590H690M670 570V597" stroke="#1f1c3c" stroke-width="6"/>
<text x="795" y="601" font-size="36" font-weight="500" fill="#1f1c3c" text-anchor="middle">12%</text>
</g>
</svg>
</body></html>
